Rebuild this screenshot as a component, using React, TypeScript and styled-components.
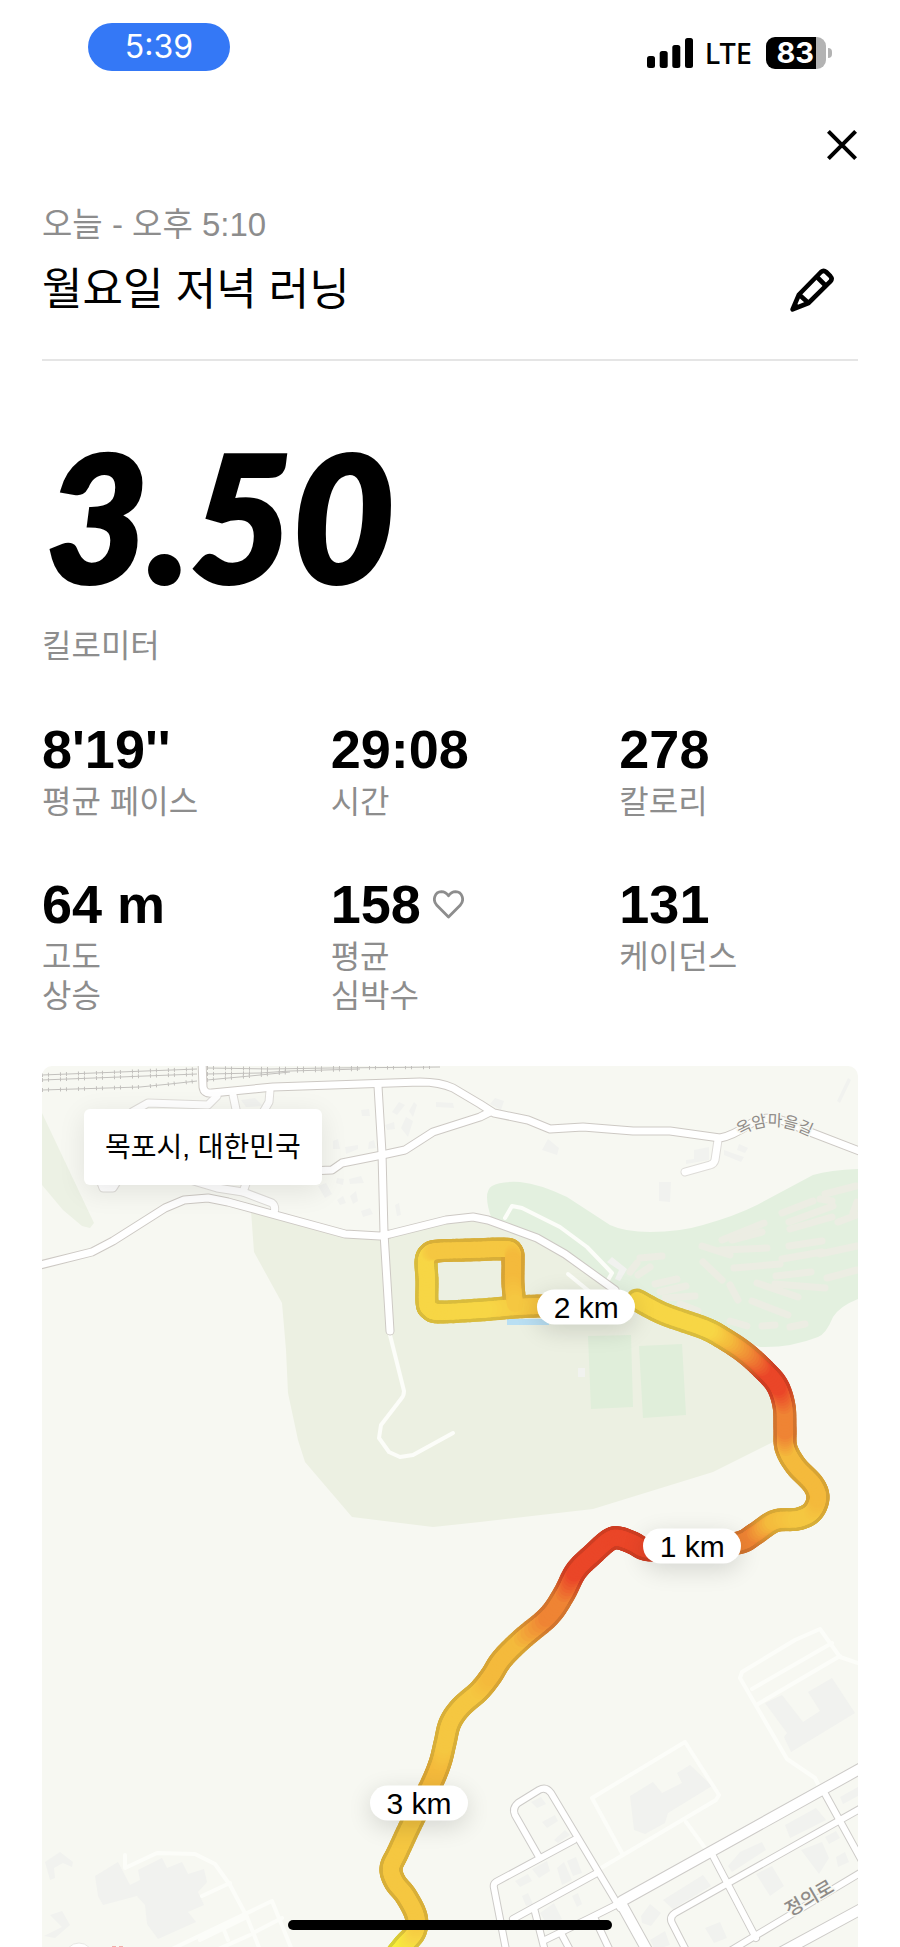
import React from "react";
import styled, { createGlobalStyle } from "styled-components";

const sans = `"Liberation Sans", "Noto Sans CJK KR", sans-serif`;

const GlobalStyle = createGlobalStyle`
  *, *::before, *::after { box-sizing: border-box; }
  body { margin: 0; background: #fff; color: #000; font-family: ${sans}; }
  h1, p, dl, dt, dd { margin: 0; }
  button { border: 0; padding: 0; background: none; color: inherit; font: inherit; cursor: pointer; }
`;

const Screen = styled.div`
  display: flex;
  flex-direction: column;
  background: #fff;
`;

const StatusBar = styled.header`
  display: flex;
  justify-content: space-between;
  align-items: flex-start;
  height: 100px;
  padding: 23px 68px 0 88px;
  font-family: Inter, sans-serif;
`;

const TimePill = styled.time`
  width: 142px;
  border-radius: 24px;
  background: #3478f6;
  color: #fff;
  font-size: 32px;
  line-height: 48px;
  text-align: center;
`;

const StatusIcons = styled.div`
  display: flex;
  align-items: center;
  height: 32px;
  margin-top: 14px;
`;

const Network = styled.span`
  margin: 0 14px 0 12px;
  font-family: "Noto Sans", sans-serif;
  font-size: 29px;
  font-weight: 500;
  line-height: 34px;
`;

const Battery = styled.span`
  width: 60px;
  height: 32px;
  padding-right: 12px;
  border-radius: 9px;
  background: linear-gradient(to right, #000 83%, #b3b3b3 83%);
  color: #fff;
  font-size: 29px;
  font-weight: 700;
  line-height: 32px;
  text-align: right;
`;

const BatteryTip = styled.span`
  width: 4px;
  height: 10px;
  margin-left: 2px;
  border-radius: 0 5px 5px 0;
  background: #b3b3b3;
`;

const CloseRow = styled.div`
  display: flex;
  justify-content: flex-end;
  padding: 30px 43px 0;
`;

const IconButton = styled.button`
  display: flex;
`;

const Content = styled.main`
  display: flex;
  flex-direction: column;
  padding: 45px 42px 0;
`;

const RunHeader = styled.section`
  padding-bottom: 41px;
  border-bottom: 2px solid #e5e5e5;
`;

const RunDate = styled.p`
  color: #8d8d8d;
  font-size: 33px;
  line-height: 40px;
`;

const TitleRow = styled.div`
  display: flex;
  justify-content: space-between;
  align-items: center;
  height: 56px;
  margin-top: 17px;
  padding-right: 23px;
`;

const Title = styled.h1`
  font-size: 44px;
  font-weight: 400;
  line-height: 56px;
`;

const Distance = styled.p`
  margin-top: 74px;
  padding-left: 4px;
  font-family: Lato, sans-serif;
  font-size: 176px;
  font-style: italic;
  font-weight: 900;
  line-height: 160px;
  -webkit-text-stroke: 4px #000;
`;

const Caption = styled.p`
  color: #8d8d8d;
  font-size: 32px;
  line-height: 39px;
`;

const DistanceUnit = styled(Caption)`
  margin-top: 32px;
`;

const Stats = styled.dl`
  display: grid;
  grid-template-columns: repeat(3, 1fr);
  gap: 52px 50px;
  margin-top: 53px;
`;

const Stat = styled.div`
  display: flex;
  flex-direction: column-reverse;
  justify-content: flex-end;
  gap: 3px;
`;

const StatLabel = styled.dt`
  color: #8d8d8d;
  font-size: 32px;
  line-height: 39px;
  white-space: pre-line;
`;

const StatValue = styled.dd`
  display: flex;
  align-items: center;
  gap: 12px;
  font-size: 54px;
  font-weight: 700;
  line-height: 61px;
`;

const MapCard = styled.section`
  position: relative;
  margin-top: 50px;
  overflow: hidden;
  border-radius: 10px 10px 0 0;
  background: #f7f8f2;
`;

const MapDrawing = styled.svg`
  display: block;
  width: 100%;
  height: auto;
`;

const PlaceTag = styled.div`
  position: absolute;
  top: 43px;
  left: 42px;
  padding: 1px 21px 0;
  border-radius: 6px;
  background: #fff;
  box-shadow: 0 6px 28px rgba(0, 0, 0, 0.09);
  font-size: 28px;
  line-height: 75px;
`;

const KmPill = styled.span<{ $left: number; $top: number }>`
  position: absolute;
  left: ${(p) => p.$left}%;
  top: ${(p) => p.$top}%;
  width: 98px;
  border-radius: 18px;
  background: #fff;
  box-shadow: 0 6px 24px rgba(0, 0, 0, 0.14);
  font-size: 30px;
  line-height: 35px;
  text-align: center;
  transform: translate(-50%, -50%);
`;

const HomeIndicator = styled.div`
  position: fixed;
  bottom: 17px;
  left: 50%;
  width: 36%;
  height: 10px;
  border-radius: 5px;
  background: #000;
  transform: translateX(-50%);
`;

const SignalIcon = () => (
  <svg width="46" height="30" viewBox="0 0 46 30" aria-hidden="true">
    <rect x="0" y="18" width="8" height="12" rx="2.5" />
    <rect x="12.7" y="13" width="8" height="17" rx="2.5" />
    <rect x="25.3" y="7" width="8" height="23" rx="2.5" />
    <rect x="38" y="0" width="8" height="30" rx="2.5" />
  </svg>
);

const CloseIcon = () => (
  <svg width="30" height="30" viewBox="0 0 30 30" stroke="#000" strokeWidth="4" aria-hidden="true">
    <path d="M1.4 1.4 28.6 28.6M28.6 1.4 1.4 28.6" />
  </svg>
);

const PencilIcon = () => (
  <svg width="46" height="46" viewBox="0 0 46 46" fill="none" stroke="#000" strokeWidth="4.6" strokeLinejoin="round" aria-hidden="true">
    <path d="M3.6 42.4 10 27.5 32 5Q34.6 2.6 37.2 5L41.4 9.2Q43.8 11.8 41.4 14.4L19.5 36Z" />
    <path d="M27.5 9.5 37 19M10 27.5 19.5 36" />
    <path d="M4 42 7 35.5 10.5 39.5Z" fill="#000" stroke="none" />
  </svg>
);

const HeartIcon = () => (
  <svg width="31" height="29" viewBox="0 0 31 29" fill="none" stroke="#8d8d8d" strokeWidth="2.8" strokeLinejoin="round" aria-hidden="true">
    <path d="M15.5 27 3.8 15.2C-.8 10.4 1.6 1.8 8.4 1.6c3.2 0 5.4 1.6 7.1 4.2 1.7-2.6 3.9-4.2 7.1-4.2 6.8.2 9.2 8.800 4.600 13.600Z" />
  </svg>
);

type Rgb = [number, number, number];
type RoutePoint = [number, number, Rgb];

const RED: Rgb = [234, 70, 40];
const ORANGE: Rgb = [239, 132, 52];
const AMBER: Rgb = [244, 186, 60];
const GOLD: Rgb = [245, 199, 65];
const YELLOW: Rgb = [247, 214, 69];
const LEMON: Rgb = [247, 240, 58];

const route: RoutePoint[] = [
  [396, 1955, LEMON], [404, 1945, LEMON], [415, 1932, YELLOW], [416, 1916, GOLD], [406, 1896, GOLD],
  [395, 1882, GOLD], [391, 1868, GOLD], [398, 1852, GOLD], [413, 1820, GOLD], [431, 1785, AMBER],
  [440, 1763, AMBER], [445, 1743, GOLD], [450, 1723, GOLD], [461, 1707, GOLD], [479, 1691, GOLD],
  [491, 1676, AMBER], [502, 1659, AMBER], [522, 1639, AMBER], [549, 1616, ORANGE], [564, 1594, ORANGE],
  [576, 1571, RED], [593, 1554, RED], [609, 1540, RED], [619, 1538, RED], [633, 1543, RED], [650, 1550, RED],
  [695, 1548, RED], [738, 1543, ORANGE], [755, 1534, ORANGE], [775, 1521, AMBER], [798, 1519, GOLD],
  [812, 1512, GOLD], [818, 1498, AMBER], [813, 1484, AMBER], [796, 1466, AMBER], [786, 1448, AMBER],
  [785, 1429, ORANGE], [784, 1406, ORANGE], [777, 1385, RED], [762, 1368, RED], [744, 1352, ORANGE],
  [723, 1338, AMBER], [704, 1328, YELLOW], [664, 1314, YELLOW], [637, 1300, YELLOW],
];

const loop: RoutePoint[] = [
  [590, 1308, AMBER], [550, 1306, AMBER], [517, 1307, GOLD], [480, 1310, YELLOW], [440, 1312, YELLOW],
  [430, 1309, YELLOW], [427, 1302, YELLOW], [427, 1280, YELLOW], [426, 1262, YELLOW], [429, 1254, YELLOW],
  [438, 1251, GOLD], [470, 1250, GOLD], [504, 1249, GOLD], [512, 1252, GOLD], [513, 1262, AMBER],
  [513, 1284, AMBER], [515, 1304, GOLD],
];

const catmull = (a: number, b: number, c: number, d: number, t: number) =>
  b + 0.5 * t * (c - a + t * (2 * a - 5 * b + 4 * c - d + t * (3 * (b - c) + d - a)));

const STEPS = 8;

const smooth = (points: RoutePoint[]): RoutePoint[] => {
  const at = (i: number) => points[Math.max(0, Math.min(points.length - 1, i))];
  const out: RoutePoint[] = [];
  for (let i = 0; i < points.length - 1; i += 1) {
    for (let s = 0; s < STEPS; s += 1) {
      const t = s / STEPS;
      const [p0, p1, p2, p3] = [at(i - 1), at(i), at(i + 1), at(i + 2)];
      out.push([
        catmull(p0[0], p1[0], p2[0], p3[0], t),
        catmull(p0[1], p1[1], p2[1], p3[1], t),
        p1[2].map((v, k) => v + (p2[2][k] - v) * t) as Rgb,
      ]);
    }
  }
  out.push(points[points.length - 1]);
  return out;
};

const RouteStroke = ({ points, width, shade }: { points: RoutePoint[]; width: number; shade: number }) => (
  <g strokeWidth={width} strokeLinecap="round">
    {points.slice(1).map(([x, y, color], i) => (
      <line
        key={i}
        x1={points[i][0]}
        y1={points[i][1]}
        x2={x}
        y2={y}
        stroke={`rgb(${color.map((v) => Math.round(v * shade)).join(",")})`}
      />
    ))}
  </g>
);

const Route = ({ points }: { points: RoutePoint[] }) => {
  const line = smooth(points);
  return (
    <>
      <RouteStroke points={line} width={23} shade={0.88} />
      <RouteStroke points={line} width={16} shade={1} />
    </>
  );
};

const majorRoads = [
  "M40 1265 92 1252 113 1241 165 1208 184 1200 208 1198 228 1202 345 1234 380 1236 390 1234 446 1220 473 1217 488 1220 510 1228 537 1238 565 1254 615 1290",
  "M202 1060 203 1087Q204 1094 212 1093L273 1087 420 1082Q440 1082 453 1088L480 1104 494 1113 528 1120 550 1129 583 1127 633 1131 670 1131 720 1138Q732 1136 750 1124 766 1114 784 1121L810 1132 862 1152",
  "M378 1086 382 1153 384 1233 390 1331",
  "M490 1112 480 1117 433 1132 405 1150 382 1155 342 1163 332 1170 308 1171",
];

const minorRoads = [
  "M718 1140 715 1160Q714 1164 710 1165L685 1172",
  "M233 1095 237 1114",
  "M270 1090 269 1102 262 1114",
  "M217 1096 208 1105 148 1103 132 1112",
  "M190 1180 217 1188 243 1192 272 1203Q276 1206 274 1213",
  "M243 1192 248 1178",
  "M100 1180 103 1188 113 1188 118 1180",
];

const streets = [
  "M539 1857 515 1815Q512 1808 518 1803L539 1790Q546 1786 551 1793L620 1908",
  "M574 1840 496 1882Q493 1884 494 1888L507 1955",
  "M597 1873 513 1919",
  "M534 1908 546 1955",
  "M620 1903 590 1918 545 1940",
  "M594 1917 612 1955",
  "M562 1935 570 1950",
  "M713 1856 756 1938",
  "M865 1806 675 1913Q669 1917 672 1923L692 1962",
  "M824 1792 868 1872",
  "M865 1870 715 1960",
];

const avenues = ["M622 1901 865 1766", "M622 1905 658 1970", "M745 1972 865 1907"];

const footpaths = [
  "M390 1335 404 1391Q404 1396 401 1399L381 1425 379 1438 389 1452 400 1457 413 1455 453 1433",
  "M505 1218 512 1206 522 1208 560 1227 587 1247 612 1273 608 1280",
  "M568 1274 590 1292",
];

const parkRoads = [
  "M622 1853 592 1798 685 1742 719 1795 716 1800 601 1868M686 1822 708 1852",
  "M740 1678 742 1672 795 1640 820 1629 840 1657 858 1663M752 1689 832 1643M758 1704 840 1656M740 1678 787 1759 815 1778 822 1792",
  "M125 1855 125 1868 157 1853 195 1854 215 1864 230 1885 247 1917 260 1950M230 1883 202 1896M170 1950 272 1901 292 1950M247 1917 200 1940M222 1925 228 1940M255 1932 282 1918M205 1955 250 1935",
];

const buildings = [
  "M765 1703 782 1695 803 1722 820 1711 808 1692 832 1678 855 1713 791 1752 784 1737 787 1733Z",
  "M630 1796 653 1782 662 1793 682 1783 677 1773 690 1765 712 1786 668 1813 665 1823 645 1834 634 1830Z",
  "M95 1876 118 1862 130 1885 140 1880 138 1870 162 1858 167 1868 182 1862 188 1874 204 1869 207 1882 198 1892 204 1905 188 1912 196 1922 158 1939 147 1924 145 1905 137 1896 103 1905 98 1896Z",
  "M45 1862 60 1852 73 1862 72 1867 63 1863 54 1868 55 1878 50 1880Z",
  "M50 1915 62 1911 70 1925 55 1938 44 1936 62 1927Z",
  "M785 1825 816 1808 826 1820 790 1838Z",
  "M728 1866 740 1852 762 1842 766 1850 732 1872Z",
  "M801 1850 822 1842 829 1858 819 1874Z",
  "M756 1874 772 1866 784 1886 770 1896Z",
  "M663 1900 703 1875 711 1886 673 1909Z",
  "M641 1916 650 1904 661 1913 651 1926 642 1923Z",
  "M840 1797 858 1787 858 1796 843 1804Z",
  "M531 1802 541 1797 546 1804 537 1808Z",
  "M542 1822 555 1815 558 1821 547 1828Z",
  "M554 1840 565 1830 570 1835 558 1843Z",
  "M532 1869 547 1861 550 1871 539 1878Z",
  "M515 1881 528 1874 532 1881 520 1887Z",
  "M557 1868 564 1862 572 1880 562 1885Z",
  "M567 1861 576 1857 582 1873 573 1876Z",
  "M522 1896 528 1893 533 1904 526 1906Z",
  "M540 1913 554 1903 562 1919 548 1926Z",
  "M572 1896 578 1893 582 1904 577 1907Z",
  "M650 1940 665 1931 670 1945 655 1950Z",
  "M705 1928 720 1922 727 1938 714 1943Z",
  "M825 1837 836 1831 840 1838 829 1844Z",
  "M836 1857 845 1852 849 1862 838 1867Z",
  "M490 1104 495 1098 504 1101 501 1110Z",
  "M542 1150 548 1139 559 1148 557 1155Z",
  "M694 1150 709 1147 709 1160 686 1164 686 1160 694 1159Z",
  "M724 1150 735 1154 744 1157 741 1162 724 1155Z",
  "M739 1144 748 1148 745 1153 737 1150Z",
  "M659 1182 671 1182 670 1202 659 1201Z",
  "M837 1101 848 1078 851 1080 840 1103Z",
  "M392 1112 399 1102 405 1105 397 1115Z",
  "M409 1111 414 1102 417 1105 413 1117Z",
  "M401 1128 406 1117 413 1121 408 1137Z",
  "M385 1125 394 1122 395 1129 387 1130Z",
  "M361 1110 369 1109 370 1116 362 1116Z",
  "M436 1102 453 1103 454 1108 436 1107Z",
  "M333 1141 338 1139 340 1149 333 1149Z",
  "M345 1147 358 1145 358 1149 346 1154Z",
  "M318 1186 326 1183 332 1194 325 1198Z",
  "M337 1178 344 1179 343 1185 336 1183Z",
  "M349 1179 361 1176 364 1183 350 1184Z",
  "M337 1200 343 1196 346 1203 340 1205Z",
  "M350 1196 356 1191 358 1201 353 1204Z",
  "M361 1211 370 1208 373 1214 363 1217Z",
  "M395 1205 399 1203 401 1215 397 1216Z",
  "M369 1142 374 1140 376 1148 368 1149Z",
  "M241 1100 255 1098 263 1106 246 1107Z",
  "M607 1262 612 1257 627 1269 620 1281 615 1279 619 1270Z",
];

const fairways = [
  "M825 1194 856 1186", "M782 1213 813 1201", "M789 1222 833 1206", "M790 1229 832 1217",
  "M820 1199 832 1201", "M838 1222 857 1215", "M722 1240 764 1223", "M732 1240 762 1232",
  "M721 1250 767 1248", "M702 1246 730 1255", "M789 1246 822 1241", "M820 1254 857 1246",
  "M782 1259 822 1252", "M734 1268 780 1264", "M776 1276 811 1272", "M827 1278 857 1270",
  "M757 1283 798 1297", "M775 1284 825 1288", "M703 1262 722 1280", "M730 1285 738 1300",
  "M640 1258 662 1256", "M630 1272 637 1263", "M638 1275 650 1267", "M655 1284 677 1279",
  "M660 1292 686 1286", "M665 1298 695 1296", "M680 1304 698 1311", "M752 1301 788 1315",
  "M730 1321 747 1326", "M762 1326 775 1325", "M790 1327 805 1324", "M853 1213 857 1202",
];

const rails = [
  "M42 1075 120 1072 197 1069", "M42 1080 120 1077 197 1074", "M42 1090 140 1087 170 1084 197 1081",
  "M207 1068 270 1069 330 1068 440 1067", "M207 1074 260 1073 290 1071 360 1069", "M207 1080 250 1076 290 1072",
];

const Lines = ({ paths }: { paths: string[] }) => (
  <>
    {paths.map((d) => (
      <path key={d} d={d} />
    ))}
  </>
);

const roadLayers = [
  { paths: minorRoads, width: 7, edge: "#dedcd8" },
  { paths: majorRoads, width: 7, edge: "#cdc9c4" },
  { paths: streets, width: 6, edge: "#cdcbc8" },
  { paths: avenues, width: 10, edge: "#cdcbc8" },
];

/* Every edge is drawn before any surface, so that junctions stay open. */
const Roads = () => (
  <g fill="none" strokeLinejoin="round" strokeLinecap="round">
    {roadLayers.map((layer, i) => (
      <g key={i} stroke={layer.edge} strokeWidth={layer.width + 2}>
        <Lines paths={layer.paths} />
      </g>
    ))}
    {roadLayers.map((layer, i) => (
      <g key={i} stroke="#fff" strokeWidth={layer.width}>
        <Lines paths={layer.paths} />
      </g>
    ))}
  </g>
);

const RunMap = () => (
  <MapDrawing viewBox="42 1066 816 881" role="img" aria-label="러닝 경로 지도">
    <path fill="#ecf1e4" d="M42 1113 94 1223 90 1228 82 1226 63 1210 42 1185Z" />
    <path
      fill="#ecf0e2"
      d="M251 1211 254 1252 282 1303 286 1350 288 1393 298 1440 305 1462 352 1517 433 1527 480 1522 593 1509 713 1472 785 1436 784 1407 762 1370 723 1340 640 1296 605 1283 565 1254 510 1228 473 1217 384 1236 345 1234Z"
    />
    <path
      fill="#e3f0df"
      d="M492 1220Q482 1192 492 1186 500 1181 520 1182 540 1184 567 1197L610 1225Q625 1232 650 1232 680 1232 703 1225 735 1216 757 1205L813 1175Q830 1170 858 1169V1299Q840 1306 833 1317 826 1334 818 1337 790 1348 760 1347L690 1325 612 1292 565 1252 537 1237Z"
    />
    <g fill="none" stroke="#ecede3" strokeWidth="7" strokeLinecap="round"><Lines paths={fairways} /></g>
    <g fill="#e0eeda">
      <path d="M588 1336 631 1335 633 1407 591 1409Z" />
      <path d="M639 1346 682 1344 686 1415 643 1418Z" />
    </g>
    <path fill="#f1f2ef" d="M578 1368h7v9h-7z" />
    <path fill="#b9dff3" d="M507 1319h42v6h-42z" />
    <g fill="#f1f2ef"><Lines paths={buildings} /></g>
    <g fill="none" stroke="#fcfdf9" strokeWidth="4" strokeLinecap="round" strokeLinejoin="round">
      <Lines paths={footpaths} />
      <Lines paths={parkRoads} />
    </g>
    <g fill="none" stroke="#c2c0bd">
      <Lines paths={rails} />
      <g strokeWidth="4" strokeDasharray="1 5 1 11"><Lines paths={rails} /></g>
    </g>
    <Roads />
    <circle cx="79" cy="1957" r="14" fill="#fff" stroke="#e8e8e4" />
    <path d="M112 1947h4M119 1947h4" stroke="#f0b0aa" strokeWidth="2" />

    <path id="village-road" fill="none" d="M740 1136Q774 1114 818 1141" />
    <g fill="#8f8b88" stroke="#f7f8f2" strokeWidth="3" paintOrder="stroke" fontFamily="'Noto Sans CJK KR', sans-serif">
      <text fontSize="16"><textPath href="#village-road">옥암마을길</textPath></text>
      <text fontSize="19" fontWeight="500" transform="translate(790 1917) rotate(-30)">정의로</text>
    </g>

    <Route points={loop} />
    <Route points={route} />
  </MapDrawing>
);

const stats = [
  { value: "8'19''", label: "평균 페이스" },
  { value: "29:08", label: "시간" },
  { value: "278", label: "칼로리" },
  { value: "64 m", label: "고도\n상승" },
  { value: "158", label: "평균\n심박수", icon: <HeartIcon /> },
  { value: "131", label: "케이던스" },
];

const markers = [
  { text: "2 km", left: 66.7, top: 27.4 },
  { text: "1 km", left: 79.7, top: 54.5 },
  { text: "3 km", left: 46.2, top: 83.7 },
];

export default function App() {
  return (
    <Screen>
      <GlobalStyle />
      <StatusBar>
        <TimePill>5:39</TimePill>
        <StatusIcons>
          <SignalIcon />
          <Network>LTE</Network>
          <Battery>83</Battery>
          <BatteryTip />
        </StatusIcons>
      </StatusBar>
      <CloseRow>
        <IconButton type="button" aria-label="닫기"><CloseIcon /></IconButton>
      </CloseRow>
      <Content>
        <RunHeader>
          <RunDate>오늘 - 오후 5:10</RunDate>
          <TitleRow>
            <Title>월요일 저녁 러닝</Title>
            <IconButton type="button" aria-label="제목 편집"><PencilIcon /></IconButton>
          </TitleRow>
        </RunHeader>
        <Distance>3.50</Distance>
        <DistanceUnit>킬로미터</DistanceUnit>
        <Stats>
          {stats.map((stat) => (
            <Stat key={stat.value}>
              <StatLabel>{stat.label}</StatLabel>
              <StatValue>{stat.value}{stat.icon}</StatValue>
            </Stat>
          ))}
        </Stats>
        <MapCard>
          <RunMap />
          <PlaceTag>목포시, 대한민국</PlaceTag>
          {markers.map((m) => (
            <KmPill key={m.text} $left={m.left} $top={m.top}>{m.text}</KmPill>
          ))}
        </MapCard>
      </Content>
      <HomeIndicator />
    </Screen>
  );
}
